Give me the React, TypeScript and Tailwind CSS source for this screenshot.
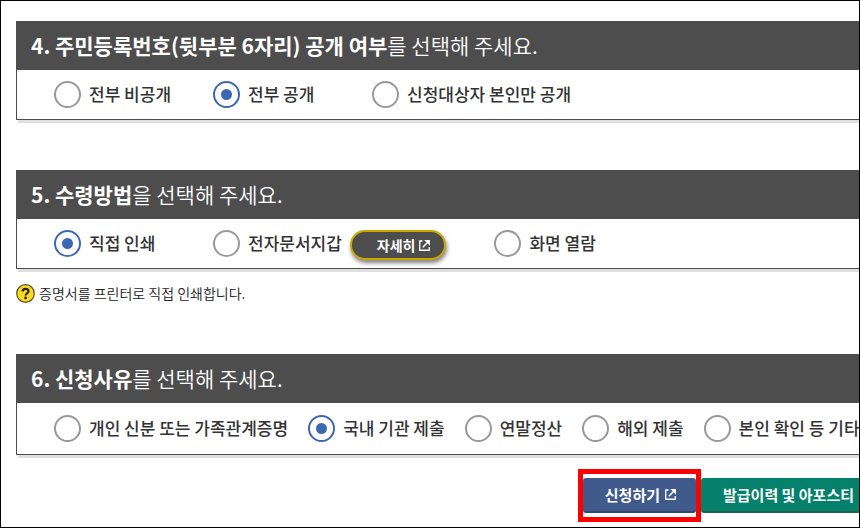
import { useState } from 'react'
import type { ReactNode } from 'react'
import clsx from 'clsx'

interface Option {
  value: string
  label: string
  extra?: ReactNode
}

interface OptionSectionProps {
  name: string
  number: number
  title: string
  particle: string
  options: Option[]
  defaultValue: string
  compact?: boolean
}

function NewWindowIcon({ className }: { className: string }) {
  return (
    <svg viewBox="0 0 11 11" className={className} fill="none" stroke="currentColor" aria-hidden="true">
      <path d="M3.5 1H.75v9.25h9.5V7" strokeWidth="1.3" />
      <path d="M3.8 7.2 8.5 2.5" strokeWidth="1.6" />
      <path d="M5.2 0H11v5.8z" fill="currentColor" stroke="none" />
    </svg>
  )
}

function OptionSection({ name, number, title, particle, options, defaultValue, compact }: OptionSectionProps) {
  const [selected, setSelected] = useState(defaultValue)

  return (
    <section className="border-b border-l border-[#4d4d4d] shadow-[2px_3px_0_#dfdfdf]">
      <h2 className="bg-[#4d4d4d] py-2 pl-[14px] text-[21px] leading-[33px] font-[350] text-white">
        <strong className="font-bold">
          {number}. {title}
        </strong>
        {particle} 선택해 주세요.
      </h2>
      <div className={clsx('flex gap-5 pl-[37px]', compact ? 'py-3' : 'py-[11px]')}>
        {options.map((option) => {
          const id = `${name}-${option.value}`
          return (
            <div
              key={option.value}
              className={clsx('flex shrink-0 items-center last:min-w-0', !compact && 'min-w-[139px]')}
            >
              <input
                type="radio"
                id={id}
                name={name}
                value={option.value}
                checked={selected === option.value}
                onChange={() => setSelected(option.value)}
                className="grid size-[27px] shrink-0 appearance-none place-items-center rounded-full border-2 border-[#999] bg-white before:size-[11px] before:rounded-full checked:border-[#3c67b1] checked:before:bg-[#3c67b1]"
              />
              <label htmlFor={id} className="pb-0.5 pl-2 text-[17px] leading-[25px] font-medium text-[#333]">
                {option.label}
              </label>
              {option.extra}
            </div>
          )
        })}
      </div>
    </section>
  )
}

const detailButton = (
  <button
    type="button"
    className="mr-7 mb-[-3px] ml-2 flex h-[30px] items-center gap-1 rounded-full border-2 border-[#c9a800] bg-[#4d4d4d] pr-[14px] pl-[25px] text-[14px] leading-5 font-bold text-white shadow-[1px_3px_4px_#00000080]"
  >
    자세히
    <NewWindowIcon className="size-[11px]" />
  </button>
)

const disclosureOptions: Option[] = [
  { value: 'none', label: '전부 비공개' },
  { value: 'all', label: '전부 공개' },
  { value: 'self', label: '신청대상자 본인만 공개' },
]

const receiveOptions: Option[] = [
  { value: 'print', label: '직접 인쇄' },
  { value: 'wallet', label: '전자문서지갑', extra: detailButton },
  { value: 'screen', label: '화면 열람' },
]

const reasonOptions: Option[] = [
  { value: 'family', label: '개인 신분 또는 가족관계증명' },
  { value: 'domestic', label: '국내 기관 제출' },
  { value: 'tax', label: '연말정산' },
  { value: 'overseas', label: '해외 제출' },
  { value: 'etc', label: '본인 확인 등 기타' },
]

export default function App() {
  return (
    <main className="min-h-screen overflow-hidden border border-black bg-white pt-5 pb-[5px] pl-[15px] font-['Noto_Sans_CJK_KR',sans-serif] whitespace-nowrap text-[#222]">
      <OptionSection
        name="disclosure"
        number={4}
        title="주민등록번호(뒷부분 6자리) 공개 여부"
        particle="를"
        options={disclosureOptions}
        defaultValue="all"
      />

      <div className="pt-[50px]">
        <OptionSection
          name="receive"
          number={5}
          title="수령방법"
          particle="을"
          options={receiveOptions}
          defaultValue="print"
        />
        <p className="flex items-center gap-1 pt-[14px] text-[14px] leading-5 font-[350]">
          <svg viewBox="0 0 19 19" className="size-[19px]" aria-hidden="true">
            <circle cx="9.5" cy="9.5" r="8.8" fill="#fbd91d" stroke="#55502c" strokeWidth="1.2" />
            <path d="M6.6 7.6c0-3.7 5.9-3.5 5.9-.3 0 2.1-2.9 2-2.9 4.2" fill="none" stroke="#222" strokeWidth="2.2" />
            <circle cx="9.6" cy="14" r="1.4" fill="#222" />
          </svg>
          증명서를 프린터로 직접 인쇄합니다.
        </p>
      </div>

      <div className="pt-[51px]">
        <OptionSection
          name="reason"
          number={6}
          title="신청사유"
          particle="를"
          options={reasonOptions}
          defaultValue="domestic"
          compact
        />
      </div>

      <div className="flex items-center justify-end pt-[14px] text-[15px] leading-5 font-bold text-white">
        <div className="border-5 border-[#f00] py-1">
          <button
            type="button"
            className="flex h-[35px] items-center gap-[5px] rounded-[3px] border-b-2 border-[#33496f] bg-[#405a8c] pr-5 pl-[22px]"
          >
            신청하기
            <NewWindowIcon className="size-[11px]" />
          </button>
        </div>
        <button
          type="button"
          className="h-[35px] rounded-l-[3px] border-b-2 border-[#1c6253] bg-[#05806b] pr-[5px] pl-[22px]"
        >
          발급이력 및 아포스티
        </button>
      </div>
    </main>
  )
}
